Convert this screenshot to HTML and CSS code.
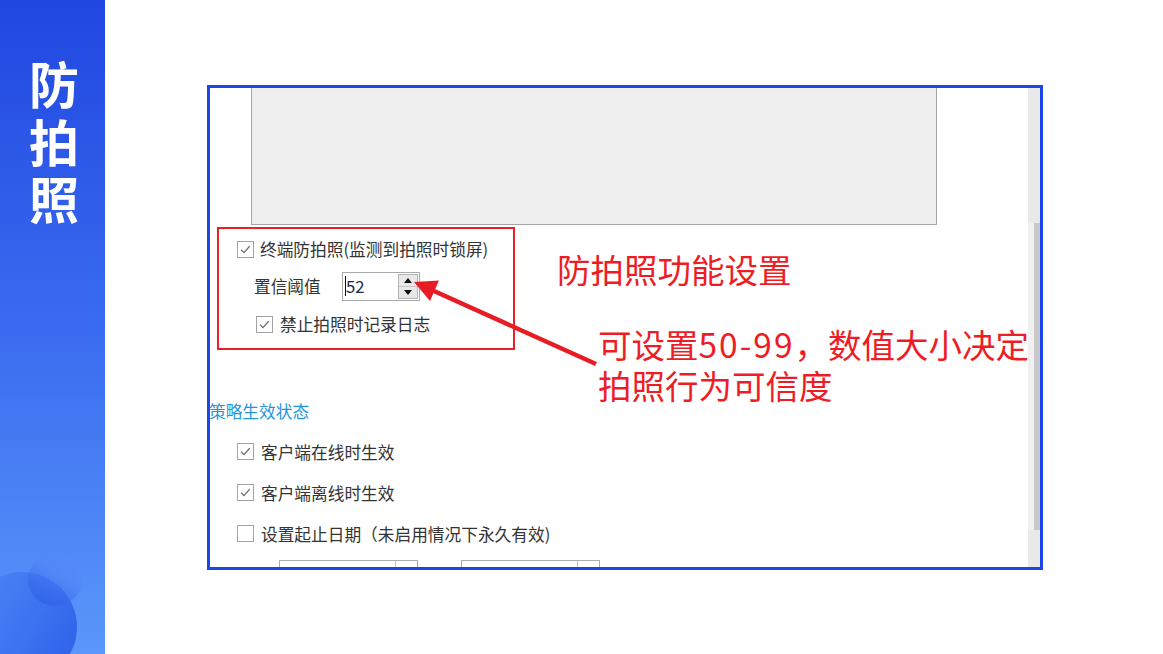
FILE: index.html
```html
<!DOCTYPE html>
<html>
<head>
    <meta charset="utf-8">
    <link rel="stylesheet" href="styles.css">
</head>
<body>
    <aside class="side">
        <div class="side-title">
            <span>防</span>
            <span>拍</span>
            <span>照</span>
        </div>
        <span class="bubble bubble-big"></span>
        <span class="bubble bubble-small"></span>
    </aside>

    <main class="stage">
        <div class="shot">
            <div class="shot-body">
                <div class="memo"></div>

                <div class="group">
                    <div class="check-row row-top">
                        <span class="box"><svg viewBox="0 0 17 17"><polyline points="3.5,8.8 6.8,12 13.2,4.8"/></svg></span>
                        <span>终端防拍照(监测到拍照时锁屏)</span>
                    </div>
                    <div class="field-row">
                        <span class="field-label">置信阈值</span>
                        <span class="spin">
                            <span class="caret"></span>
                            <span class="spin-value">52</span>
                            <span class="spin-btns">
                                <span class="spin-btn"><svg viewBox="0 0 8 5"><polygon points="0,5 8,5 4,0"/></svg></span>
                                <span class="spin-btn"><svg viewBox="0 0 8 5"><polygon points="0,0 8,0 4,5"/></svg></span>
                            </span>
                        </span>
                    </div>
                    <div class="check-row row-log">
                        <span class="box"><svg viewBox="0 0 17 17"><polyline points="3.5,8.8 6.8,12 13.2,4.8"/></svg></span>
                        <span>禁止拍照时记录日志</span>
                    </div>
                </div>

                <div class="section-title">策略生效状态</div>

                <div class="check-list">
                    <div class="check-row">
                        <span class="box"><svg viewBox="0 0 17 17"><polyline points="3.5,8.8 6.8,12 13.2,4.8"/></svg></span>
                        <span>客户端在线时生效</span>
                    </div>
                    <div class="check-row">
                        <span class="box"><svg viewBox="0 0 17 17"><polyline points="3.5,8.8 6.8,12 13.2,4.8"/></svg></span>
                        <span>客户端离线时生效</span>
                    </div>
                    <div class="check-row">
                        <span class="box"></span>
                        <span>设置起止日期（未启用情况下永久有效)</span>
                    </div>
                </div>

                <div class="dates">
                    <span class="date-box"><span class="date-btn"></span></span>
                    <span class="date-box"><span class="date-btn"></span></span>
                </div>
            </div>
            <div class="scrollbar"><div class="thumb"></div></div>
        </div>
    </main>

    <!-- red notes drawn over the screenshot -->
    <div class="note note-title">防拍照功能设置</div>
    <div class="note note-range">
        <div>可设置<span class="num">50-99</span>，数值大小决定</div>
        <div>拍照行为可信度</div>
    </div>
    <svg class="pointer" width="1163" height="654" viewBox="0 0 1163 654">
        <line x1="434" y1="291" x2="596" y2="364"/>
        <polygon points="414,282 439,280.5 430,301"/>
    </svg>
</body>
</html>
```

FILE: styles.css
```css
* {
    box-sizing: border-box;
}

body {
    margin: 0;
    width: 1163px;
    height: 654px;
    display: flex;
    position: relative;
    overflow: hidden;
    background: #fff;
    font-family: "Noto Sans CJK SC", "Noto Sans", sans-serif;
}

/* left band */
.side {
    width: 105px;
    height: 654px;
    position: relative;
    overflow: hidden;
    background: linear-gradient(180deg, #2147e0 0%, #3a6bf0 50%, #5b97fa 100%);
}

.side-title {
    display: flex;
    flex-direction: column;
    gap: 7.5px;
    padding: 57px 0 0 29px;
    font-size: 50px;
    line-height: 50px;
    font-weight: 700;
    color: #fff;
}

.bubble {
    position: absolute;
    border-radius: 50%;
}

.bubble-big {
    left: -33px;
    top: 572px;
    width: 110px;
    height: 110px;
    background: linear-gradient(120deg, #4f86f6 0%, #3d72f0 55%, #2c5ee8 100%);
}

.bubble-small {
    left: 28px;
    top: 553px;
    width: 54px;
    height: 53px;
    background: linear-gradient(30deg, rgba(40, 90, 230, 0.75) 0%, rgba(80, 130, 245, 0.35) 60%, rgba(110, 160, 252, 0.1) 100%);
}

/* screenshot area */
.stage {
    flex: 1;
    padding: 85px 0 0 102px;
}

.shot {
    width: 836px;
    height: 485px;
    border: 3px solid #1c47e8;
    display: flex;
    overflow: hidden;
    background: #fff;
}

.shot-body {
    flex: 1;
    overflow: hidden;
    font-size: 16.7px;
    color: #333;
}

.memo {
    margin-left: 41px;
    width: 686px;
    height: 137px;
    background: #efefef;
    border: 1px solid #a4a6aa;
    border-top: none;
}

.group {
    margin: 2px 0 0 7px;
    width: 298px;
    height: 123px;
    border: 2px solid #e8202a;
    padding-top: 5px;
}

.check-row {
    display: flex;
    align-items: center;
    height: 30px;
    line-height: 22px;
    white-space: nowrap;
}

.box {
    width: 17px;
    height: 17px;
    flex: none;
    margin-right: 6px;
    border: 1px solid #a3a3a3;
    background: #fff;
}

.box svg {
    display: block;
    width: 15px;
    height: 15px;
    fill: none;
    stroke: #6b6b6b;
    stroke-width: 1.4;
}

.row-top {
    padding-left: 18px;
}

.row-log {
    margin-top: 8px;
    padding-left: 37px;
}

.row-log .box {
    margin-right: 7px;
}

.field-row {
    display: flex;
    align-items: center;
    height: 30px;
    margin-top: 7px;
    padding-left: 35px;
}

.field-label {
    width: 88px;
}

.spin {
    width: 78px;
    height: 29px;
    border: 1px solid #a9a9a9;
    display: flex;
    align-items: center;
    padding-left: 2px;
}

.caret {
    width: 1px;
    height: 20px;
    background: #111;
}

.spin-value {
    width: 52px;
    color: #1d2848;
    line-height: 20px;
}

.spin-btns {
    margin-left: auto;
    margin-right: 1px;
    width: 20px;
    height: 25px;
    display: flex;
    flex-direction: column;
    border: 1px solid #b5b5b5;
    background: #e8e8e8;
}

.spin-btn {
    flex: 1;
    display: flex;
    align-items: center;
    justify-content: center;
}

.spin-btn + .spin-btn {
    border-top: 1px solid #c6c6c6;
}

.spin-btn svg {
    width: 8px;
    height: 5px;
    fill: #111;
}

.section-title {
    margin: 50px 0 0 -1px;
    height: 22px;
    line-height: 22px;
    color: #1f95dc;
}

.check-list {
    padding: 9px 0 0 27px;
}

.check-list .check-row {
    height: 41px;
}

.check-list .box {
    margin-right: 7px;
}

.dates {
    display: flex;
    gap: 43px;
    margin: 6px 0 0 69px;
}

.date-box {
    width: 139px;
    height: 26px;
    border: 1px solid #ababab;
    display: flex;
    justify-content: flex-end;
}

.date-btn {
    width: 22px;
    border-left: 1px solid #c4c4c4;
}

.scrollbar {
    width: 12px;
    background: #e9e9e9;
}

.thumb {
    margin-top: 135px;
    height: 307px;
    background: linear-gradient(90deg, #f0f0f0 50%, #c8c8c8 50%);
}

/* annotations */
.note {
    position: absolute;
    color: #ee1d25;
    font-size: 33.5px;
    white-space: nowrap;
}

.note-title {
    left: 557px;
    top: 252px;
    line-height: 34px;
}

.note-range {
    left: 598px;
    top: 327px;
    line-height: 34px;
    display: flex;
    flex-direction: column;
    gap: 7px;
}

.num {
    letter-spacing: 2px;
}

.pointer {
    position: absolute;
    left: 0;
    top: 0;
    pointer-events: none;
}

.pointer line {
    stroke: #e81c24;
    stroke-width: 4.5;
}

.pointer polygon {
    fill: #e81c24;
}
```
